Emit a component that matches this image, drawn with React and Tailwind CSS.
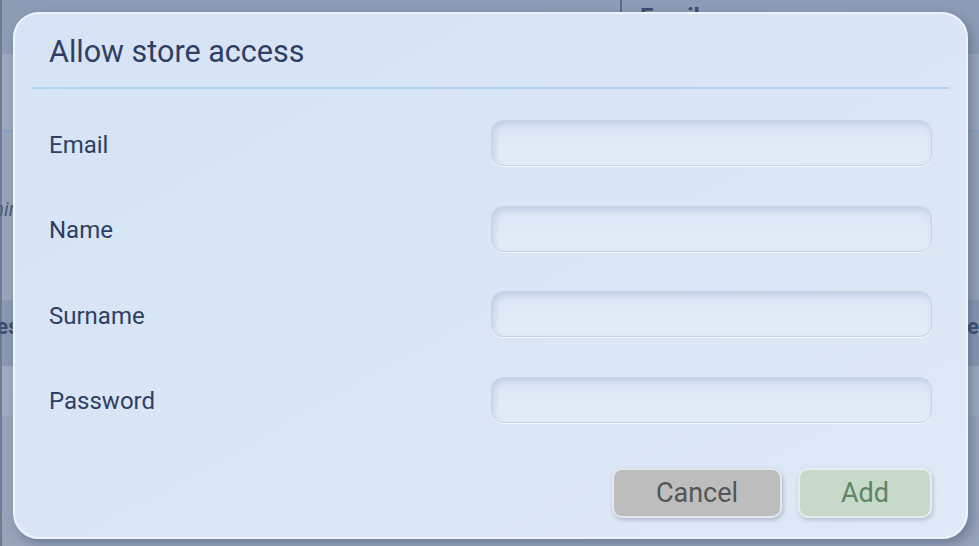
import React from 'react';

const fields = ['Email', 'Name', 'Surname', 'Password'];

const Backdrop = () => (
  <div className="flex flex-col h-full border-l-2 border-[#6f7c90]">
    <div className="h-[54px] bg-[#8d9db6] flex">
      <div className="w-[618px]" />
      <div className="border-l-2 border-[#5d6c86] pl-[18px] text-[24px] font-bold text-[#3e4e6e] leading-[34px]">Email</div>
    </div>
    <div className="h-[76px] bg-[#9dabc0]" />
    <div className="h-[2px] bg-[#86a3c6]" />
    <div className="h-[168px] bg-[#98a6bc] flex items-center">
      <span className="italic text-[20px] text-[#4a5a78] -ml-[26px] -mt-[14px]">Emir</span>
    </div>
    <div className="h-[66px] bg-[#8999b2] flex items-center justify-between">
      <span className="font-bold text-[22px] text-[#3e4e6e] -ml-[38px] -mt-[14px]">Roles</span>
      <span className="font-bold text-[22px] text-[#3e4e6e] -mt-[14px]">Role</span>
    </div>
    <div className="h-[50px] bg-[#9eacc1]" />
    <div className="flex-1 bg-[#97a5bb]" />
  </div>
);

export default function App() {
  return (
    <div className="relative w-[979px] h-[546px] overflow-hidden font-['Roboto',sans-serif] bg-[#97a5bb]">
      <Backdrop />
      <div className="absolute left-[13px] top-[12px] w-[955px] h-[527px] rounded-[26px] border-2 border-[#eef4fb] bg-gradient-to-br from-[#d5e3f4] to-[#dfe9f7] shadow-[4px_5px_12px_rgba(50,65,95,0.4)] px-[17px]">
        <div className="h-[75px] border-b-2 border-[#b3d2ee] flex items-center px-[17px] pt-[3px]">
          <h2 className="text-[30.5px] text-[#2f3f64] leading-none">Allow store access</h2>
        </div>
        <div className="mt-[31px] px-[17px] flex flex-col gap-[39.5px]">
          {fields.map((f) => (
            <div key={f} className="flex items-center justify-between">
              <label className="text-[24px] text-[#2e3f63] pt-[3px]">{f}</label>
              <input
                type={f === 'Password' ? 'password' : 'text'}
                className="w-[441px] h-[46px] rounded-[12px] border border-[#c8d3e7] bg-gradient-to-b from-[#dbe6f5] to-[#e3edf9] shadow-[inset_2px_3px_6px_rgba(140,160,195,0.35),0_1px_0_rgba(255,255,255,0.6)] outline-none px-3 text-[18px] text-[#2e3f63]"
              />
            </div>
          ))}
        </div>
        <div className="mt-[45px] px-[17px] flex justify-end gap-[16px]">
          <button className="w-[170px] h-[50px] rounded-[10px] bg-[#bdbdbd] border-2 border-[#e4e8ee] text-[27px] text-[#555555] pt-[2px] shadow-[1px_2px_4px_rgba(80,95,125,0.35)]">
            Cancel
          </button>
          <button className="w-[134px] h-[50px] rounded-[10px] bg-[#c7d9cb] border-2 border-[#e6eef0] text-[27px] text-[#5e8464] pt-[2px] shadow-[1px_2px_4px_rgba(80,95,125,0.3)]">
            Add
          </button>
        </div>
      </div>
    </div>
  );
}
